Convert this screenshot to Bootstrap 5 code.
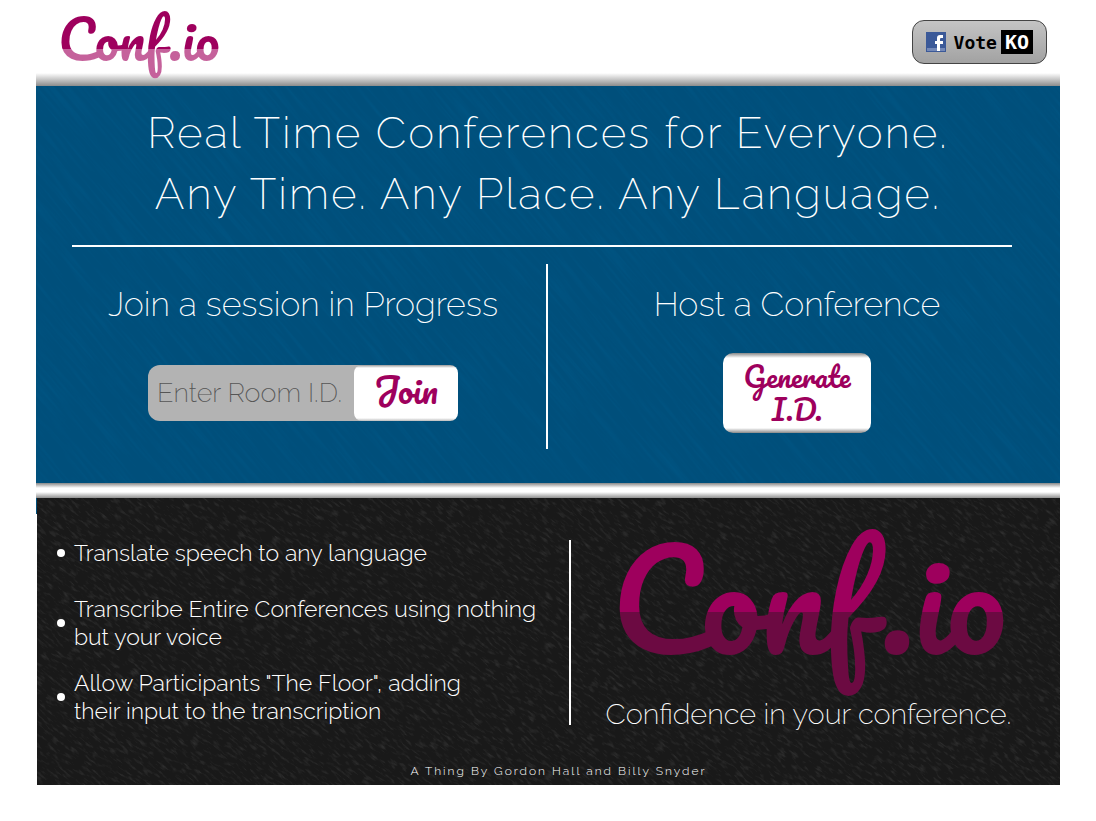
<!DOCTYPE html>
<html lang="en">
<head>
<meta charset="utf-8">
<meta name="viewport" content="width=device-width, initial-scale=1">
<title>Conf.io</title>
<link href="https://cdn.jsdelivr.net/npm/bootstrap@5.3.0/dist/css/bootstrap.min.css" rel="stylesheet">
<style>
  :root { --plum: #9e005d; --blue: #004f7b; --ink: #191919; }
  body { font-family: Raleway, Lato, "Open Sans", sans-serif; font-weight: 200; background: #fff; color: #fff; }
  .page-shell { margin: 0 36px 36px; }

  .site-header { height: 86px; padding: 0 13px 0 18px; background: linear-gradient(#fff, #8c8c8c) bottom / 100% 13px no-repeat; }
  .wordmark { font-family: Pacifico, Lato, sans-serif; font-weight: 400; text-decoration: none;
    color: transparent; -webkit-background-clip: text; background-clip: text; }
  .wordmark-sm { font-size: 54px; line-height: 76px; padding-bottom: 8px; background-image: linear-gradient(var(--plum) 49px, #c5619b 49px); }
  .wordmark-lg { font-size: 132px; line-height: 200px; margin: -42px 0 -10px; background-image: linear-gradient(var(--plum) 114px, #6c0a42 114px); }

  .vote-btn { height: 44px; margin-top: 20px; padding: 0 13px; border: 1px solid #444; border-radius: 12px; color: #000;
    background: linear-gradient(#c4c4c4, #a2a2a2); font: bold 18px "DejaVu Sans Mono", monospace; }
  .vote-btn .ko { background: #000; color: #fff; padding: 0 4px; line-height: 24px; font-size: 20px; }

  .hero, .features { isolation: isolate; }
  .texture { position: absolute; inset: 0; width: 100%; height: 100%; z-index: -1; }
  .hero { background: var(--blue); padding: 16px 36px 34px; }
  .hero h1 { font-size: 44px; line-height: 61px; font-weight: 200; letter-spacing: 2px; margin: 0 0 21px; }
  .rule { height: 2px; opacity: 1; background: #fff; border: 0; margin: 0 12px 17px 0; }
  .choices { height: 185px; }
  .choices .join-side { border-right: 2px solid #fff; padding-right: 12px; }
  .choices .host-side { padding-left: 22px; }
  .choices h2 { font-size: 34px; line-height: 44px; font-weight: 200; margin: 18px 0 0; }
  .join-form { width: 310px; height: 56px; margin-top: 39px; background: #b3b3b3; border-radius: 12px; }
  .join-form input { background: transparent; border: 0; padding: 0 0 0 9px; font-size: 27px; font-weight: 200; color: #555; }
  .join-form input:focus { background: transparent; box-shadow: none; }
  .join-form input::placeholder { color: #555; }
  .script-btn { border: 0; border-radius: 8px; color: var(--plum); font-family: Pacifico, Lato, sans-serif; font-weight: 400; }
  .join-btn { width: 104px; font-size: 34px; line-height: 44px; padding: 0 0 6px; background: linear-gradient(#999, #fff 3px, #fff 53px, #bbb); }
  .make-btn { width: 148px; height: 80px; margin-top: 27px; padding: 0; font-size: 28px; line-height: 33px; border-radius: 10px;
    background: linear-gradient(#888, #fff 5px, #fff 75px, #888); }

  .band { height: 15px; background: linear-gradient(#888, #fff 5px, #fff 9px, #909090); }
  .features { background: var(--ink); margin-left: 1px; padding: 42px 0 6px 20px; }
  .features::before { content: ""; position: absolute; left: -1px; top: 0; width: 1px; height: 16px; background: var(--blue); }
  .feature-side { width: 514px; border-right: 2px solid #fff; height: 185px; }
  .feature-side ul { font-size: 23px; line-height: 28px; font-weight: 300; margin-top: -1px; }
  .feature-side li { display: flex; align-items: center; gap: 9px; margin-bottom: 18px; }
  .feature-side li:first-child { margin-bottom: 28px; }
  .feature-side li::before { content: ""; flex: none; width: 8px; height: 8px; border-radius: 50%; background: #fff; }
  .brand-side { height: 192px; padding-right: 14px; }
  .tagline { font-size: 29px; line-height: 36px; }
  .credit { font-size: 12px; line-height: 16px; letter-spacing: 2px; font-weight: 300; margin-top: 31px; }
</style>
</head>
<body>
<div class="page-shell">
  <header class="site-header d-flex justify-content-between align-items-start">
    <a class="wordmark wordmark-sm px-1" href="#">Conf.io</a>
    <button type="button" class="vote-btn d-flex align-items-center">
      <svg width="20" height="20" viewBox="0 0 20 20" class="me-2" aria-hidden="true">
        <path fill="#3b5998" d="M0 0h20v20H0z"/><path fill="#7489b8" d="M1 16h18v3H1z"/>
        <path fill="#fff" d="M11 19v-7H9V9h2V6q0-3 3-3h3v3h-2q-1 0-1 1v2h3v3h-3v7z"/>
      </svg>
      <span class="me-1">Vote</span><span class="ko">KO</span>
    </button>
  </header>

  <main>
    <section class="hero position-relative text-center">
      <svg class="texture" aria-hidden="true">
        <filter id="brush" x="0" y="0" width="100%" height="100%" color-interpolation-filters="sRGB">
          <feTurbulence type="fractalNoise" baseFrequency=".015 .3" numOctaves="3" seed="4"/>
          <feColorMatrix values="0 0 0 0 0  0 0 0 0 .4  0 0 0 0 .6  1.2 0 0 0 -.5"/>
        </filter>
        <rect x="-200" y="-1100" width="1700" height="1800" transform="rotate(50)" filter="url(#brush)" opacity=".4"/>
      </svg>
      <h1>Real Time Conferences for Everyone.<br>Any Time. Any Place. Any Language.</h1>
      <hr class="rule">
      <div class="row g-0 choices">
        <div class="col-6 join-side">
          <h2>Join a session in Progress</h2>
          <form class="join-form d-flex mx-auto">
            <label class="visually-hidden" for="room">Room I.D.</label>
            <input id="room" type="text" class="form-control" placeholder="Enter Room I.D.">
            <button type="button" class="script-btn join-btn flex-shrink-0">Join</button>
          </form>
        </div>
        <div class="col-6 host-side">
          <h2>Host a Conference</h2>
          <button type="button" class="script-btn make-btn">Generate<br>I.D.</button>
        </div>
      </div>
    </section>
    <div class="band"></div>

    <section class="features position-relative">
      <svg class="texture" aria-hidden="true">
        <filter id="grain" x="0" y="0" width="100%" height="100%" color-interpolation-filters="sRGB">
          <feTurbulence type="fractalNoise" baseFrequency=".1 .4" numOctaves="3" seed="9"/>
          <feColorMatrix values="0 0 0 0 .35  0 0 0 0 .35  0 0 0 0 .35  2.4 0 0 0 -1.2"/>
        </filter>
        <rect x="-200" y="-900" width="1600" height="1500" transform="rotate(38)" filter="url(#grain)" opacity=".4"/>
      </svg>
      <div class="d-flex">
        <div class="feature-side flex-shrink-0">
          <ul class="list-unstyled mb-0">
            <li><span>Translate speech to any language</span></li>
            <li><span>Transcribe Entire Conferences using nothing<br>but your voice</span></li>
            <li><span>Allow Participants "The Floor", adding<br>their input to the transcription</span></li>
          </ul>
        </div>
        <div class="brand-side flex-grow-1 d-flex flex-column align-items-center justify-content-between">
          <span class="wordmark wordmark-lg px-2">Conf.io</span>
          <span class="tagline">Confidence in your conference.</span>
        </div>
      </div>
      <p class="credit text-center mb-0">A Thing By Gordon Hall and Billy Snyder</p>
    </section>
  </main>
</div>
<script src="https://cdn.jsdelivr.net/npm/bootstrap@5.3.0/dist/js/bootstrap.bundle.min.js"></script>
</body>
</html>
